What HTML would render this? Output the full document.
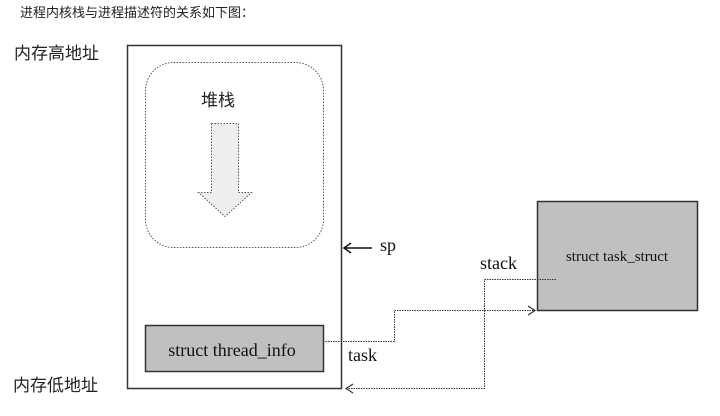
<!DOCTYPE html><html><head><meta charset="utf-8"><style>
body{margin:0;width:720px;height:416px;background:#fff;overflow:hidden}
svg{display:block}
</style></head><body>
<svg width="720" height="416" xmlns="http://www.w3.org/2000/svg">
<text x="20" y="17" font-family="Liberation Sans, Noto Sans CJK SC, sans-serif" font-size="13" fill="#222">进程内核栈与进程描述符的关系如下图：</text>
<text x="14" y="59" font-family="Noto Sans CJK SC, sans-serif" font-size="17" fill="#222">内存高地址</text>
<text x="13" y="391" font-family="Noto Sans CJK SC, sans-serif" font-size="17" fill="#222">内存低地址</text>
<rect x="127.5" y="45.5" width="214" height="343" fill="#fff" stroke="#333" stroke-width="1.5"/>
<rect x="145.5" y="62.5" width="178" height="185" rx="28" fill="#fff" stroke="#555" stroke-dasharray="1.5 1.5"/>
<text x="218" y="106" text-anchor="middle" font-family="Noto Sans CJK SC, sans-serif" font-size="17" fill="#222">堆栈</text>
<path d="M211.5 123.5 H238.5 V192.5 H251.5 L225 216.5 L198.5 192.5 H211.5 Z" fill="#eee" stroke="#555" stroke-dasharray="1.5 1.5"/>
<rect x="145.5" y="325.5" width="178" height="46" fill="#c0c0c0" stroke="#333" stroke-width="1.5"/>
<text x="232" y="356" text-anchor="middle" font-family="Liberation Serif, serif" font-size="18" fill="#111">struct thread_info</text>
<rect x="537.5" y="201.5" width="160" height="109" fill="#c0c0c0" stroke="#333" stroke-width="1.5"/>
<text x="617" y="261" text-anchor="middle" font-family="Liberation Serif, serif" font-size="15" fill="#111">struct task_struct</text>
<path d="M344 248 H372" stroke="#111" stroke-width="1.5"/>
<path d="M351 243 L344 248 L351 253" stroke="#111" stroke-width="1.5" fill="none"/>
<text x="380" y="251" font-family="Liberation Serif, serif" font-size="18" fill="#111">sp</text>
<text x="480" y="269" font-family="Liberation Serif, serif" font-size="18" fill="#111">stack</text>
<text x="348" y="361" font-family="Liberation Serif, serif" font-size="18" fill="#111">task</text>
<g stroke="#333" fill="none" stroke-dasharray="1.5 1">
<path d="M323 341.5 H394.5 V310.5 H535"/>
<path d="M556 279.5 H484.5 V388.5 H346"/>
</g>
<path d="M528 306 L535 310.5 L528 315" stroke="#333" fill="none" stroke-width="1.2"/>
<path d="M353 384 L346 388.5 L353 393" stroke="#333" fill="none" stroke-width="1.2"/>
</svg>
</body></html>
